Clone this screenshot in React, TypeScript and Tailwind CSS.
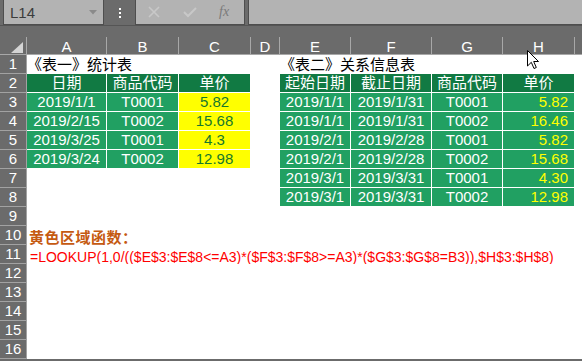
import React from "react";

const GRID =
  "grid grid-cols-[27px_80px_72px_72px_29px_71px_81px_71px_72px_1fr] h-[19px]";
const FONT = "font-['Liberation_Sans','Noto_Sans_CJK_SC',sans-serif]";

type Kind = "e" | "h" | "g" | "y" | "gy";

function Cell({ kind, text }: { kind: Kind; text?: string }) {
  if (kind === "e") return <div className="bg-white" />;
  const base =
    "h-[19px] border-r border-b border-white text-[15px] leading-[18px] whitespace-nowrap overflow-hidden";
  if (kind === "h")
    return <div className={`${base} bg-[#117a43] text-white text-center`}>{text}</div>;
  if (kind === "g")
    return <div className={`${base} bg-[#21a062] text-white text-center`}>{text}</div>;
  if (kind === "y")
    return <div className={`${base} bg-[#ffff00] text-[#17782c] text-center`}>{text}</div>;
  return <div className={`${base} bg-[#21a062] text-[#ffff00] text-right pr-[6px]`}>{text}</div>;
}

function RowHead({ n }: { n: number }) {
  return (
    <div className="h-[19px] bg-[#6b6b6b] border-b border-r border-[#a2a2a2] text-white text-[15px] leading-[18px] text-center">
      {n}
    </div>
  );
}

function TableRow({ n, cells }: { n: number; cells: [Kind, string?][] }) {
  return (
    <div className={GRID}>
      <RowHead n={n} />
      {cells.map((c, i) => (
        <Cell key={i} kind={c[0]} text={c[1]} />
      ))}
      <div className="bg-white" />
    </div>
  );
}

function TextRow({ n, children }: { n: number; children?: React.ReactNode }) {
  return (
    <div className="flex h-[19px]">
      <div className="w-[27px] shrink-0">
        <RowHead n={n} />
      </div>
      <div className="flex-1 bg-white whitespace-nowrap overflow-visible relative">{children}</div>
    </div>
  );
}

export default function App() {
  const t1 = [
    ["2019/1/1", "T0001", "5.82"],
    ["2019/2/15", "T0002", "15.68"],
    ["2019/3/25", "T0001", "4.3"],
    ["2019/3/24", "T0002", "12.98"],
  ];
  const t2 = [
    ["2019/1/1", "2019/1/31", "T0001", "5.82"],
    ["2019/1/1", "2019/1/31", "T0002", "16.46"],
    ["2019/2/1", "2019/2/28", "T0001", "5.82"],
    ["2019/2/1", "2019/2/28", "T0002", "15.68"],
    ["2019/3/1", "2019/3/31", "T0001", "4.30"],
    ["2019/3/1", "2019/3/31", "T0002", "12.98"],
  ];
  const rows: [Kind, string?][][] = [];
  rows.push([
    ["h", "日期"],
    ["h", "商品代码"],
    ["h", "单价"],
    ["e"],
    ["h", "起始日期"],
    ["h", "截止日期"],
    ["h", "商品代码"],
    ["h", "单价"],
  ]);
  for (let i = 0; i < 6; i++) {
    const a = t1[i];
    const b = t2[i];
    const r: [Kind, string?][] = a
      ? [["g", a[0]], ["g", a[1]], ["y", a[2]]]
      : [["e"], ["e"], ["e"]];
    r.push(["e"]);
    r.push(["g", b[0]], ["g", b[1]], ["g", b[2]], ["gy", b[3]]);
    rows.push(r);
  }
  const cols = ["A", "B", "C", "D", "E", "F", "G", "H"];

  return (
    <div className={`w-[582px] h-[361px] overflow-hidden bg-[#6b6b6b] relative ${FONT}`}>
      {/* formula bar */}
      <div className="flex h-[26px] bg-[#6b6b6b] border-b border-[#555555]">
        <div className="ml-[3px] w-[101px] h-[25px] bg-[#b3b3b3] border border-t-0 border-[#4e4e4e] flex items-center justify-between pl-[6px] pr-[6px]">
          <span className="text-[15px] text-[#3c3c3c] leading-none">L14</span>
          <svg width="8" height="5" viewBox="0 0 8 5">
            <path d="M0 0 L8 0 L4 4.5 Z" fill="#8a8a8a" />
          </svg>
        </div>
        <div className="w-[31px] flex flex-col items-center justify-center gap-[2px]">
          <div className="w-[2px] h-[2px] bg-white" />
          <div className="w-[2px] h-[2px] bg-white" />
          <div className="w-[2px] h-[2px] bg-white" />
        </div>
        <div className="w-[110px] h-[25px] bg-[#b3b3b3] border border-t-0 border-[#4e4e4e] flex items-center">
          <svg className="ml-[12px]" width="12" height="12" viewBox="0 0 12 12">
            <path d="M1 1 L11 11 M11 1 L1 11" stroke="#c8c8c8" strokeWidth="1.6" />
          </svg>
          <svg className="ml-[23px]" width="14" height="11" viewBox="0 0 14 11">
            <path d="M1 5 L5 9 L13 1" stroke="#c8c8c8" strokeWidth="2" fill="none" />
          </svg>
          <span className="ml-[22px] text-[14px] italic text-[#7a7a7a] font-['Liberation_Serif',serif] leading-none">
            fx
          </span>
        </div>
        <div className="ml-[3px] flex-1 h-[25px] bg-[#b3b3b3] border border-t-0 border-r-0 border-[#4e4e4e]" />
      </div>

      {/* gap */}
      <div className="h-[11px]" />

      {/* column headers */}
      <div className="grid grid-cols-[27px_80px_72px_72px_29px_71px_81px_71px_72px_1fr] h-[18px] border-b border-[#a8a8a8]">
        <div className="border-r border-[#a8a8a8] relative">
          <svg className="absolute left-[11px] top-[5px]" width="12" height="11" viewBox="0 0 12 11">
            <path d="M12 0 L12 11 L0 11 Z" fill="#d4d4d4" />
          </svg>
        </div>
        {cols.map((c) => (
          <div
            key={c}
            className="border-r border-[#a8a8a8] text-white text-[15px] leading-[19px] text-center"
          >
            {c}
          </div>
        ))}
        <div />
      </div>

      {/* row 1 */}
      <div className={GRID}>
        <RowHead n={1} />
        <div className="col-span-4 bg-white text-[15px] leading-[19px] text-black whitespace-nowrap">
          《表一》统计表
        </div>
        <div className="col-span-5 bg-white text-[15px] leading-[19px] text-black whitespace-nowrap">
          《表二》关系信息表
        </div>
      </div>

      {rows.map((r, i) => (
        <TableRow key={i} n={i + 2} cells={r} />
      ))}

      <TextRow n={9} />
      <TextRow n={10}>
        <span className="pl-[2px] text-[15px] leading-[19px] font-bold text-[#c55a11] tracking-[0.5px]">
          黄色区域函数：
        </span>
      </TextRow>
      <TextRow n={11}>
        <span className="pl-[3px] text-[14px] leading-[19px] text-[#ff0000]">
          =LOOKUP(1,0/(($E$3:$E$8&lt;=A3)*($F$3:$F$8&gt;=A3)*($G$3:$G$8=B3)),$H$3:$H$8)
        </span>
      </TextRow>
      <TextRow n={12} />
      <TextRow n={13} />
      <TextRow n={14} />
      <TextRow n={15} />
      <TextRow n={16} />

      {/* mouse cursor */}
      <svg
        className="absolute left-[527px] top-[50px]"
        width="13"
        height="20"
        viewBox="0 0 13 20"
      >
        <path
          d="M0.5 0.5 L0.5 16 L4.3 12.3 L7 18.5 L9.3 17.5 L6.7 11.5 L11.5 11.5 Z"
          fill="white"
          stroke="black"
          strokeWidth="1"
        />
      </svg>
    </div>
  );
}
